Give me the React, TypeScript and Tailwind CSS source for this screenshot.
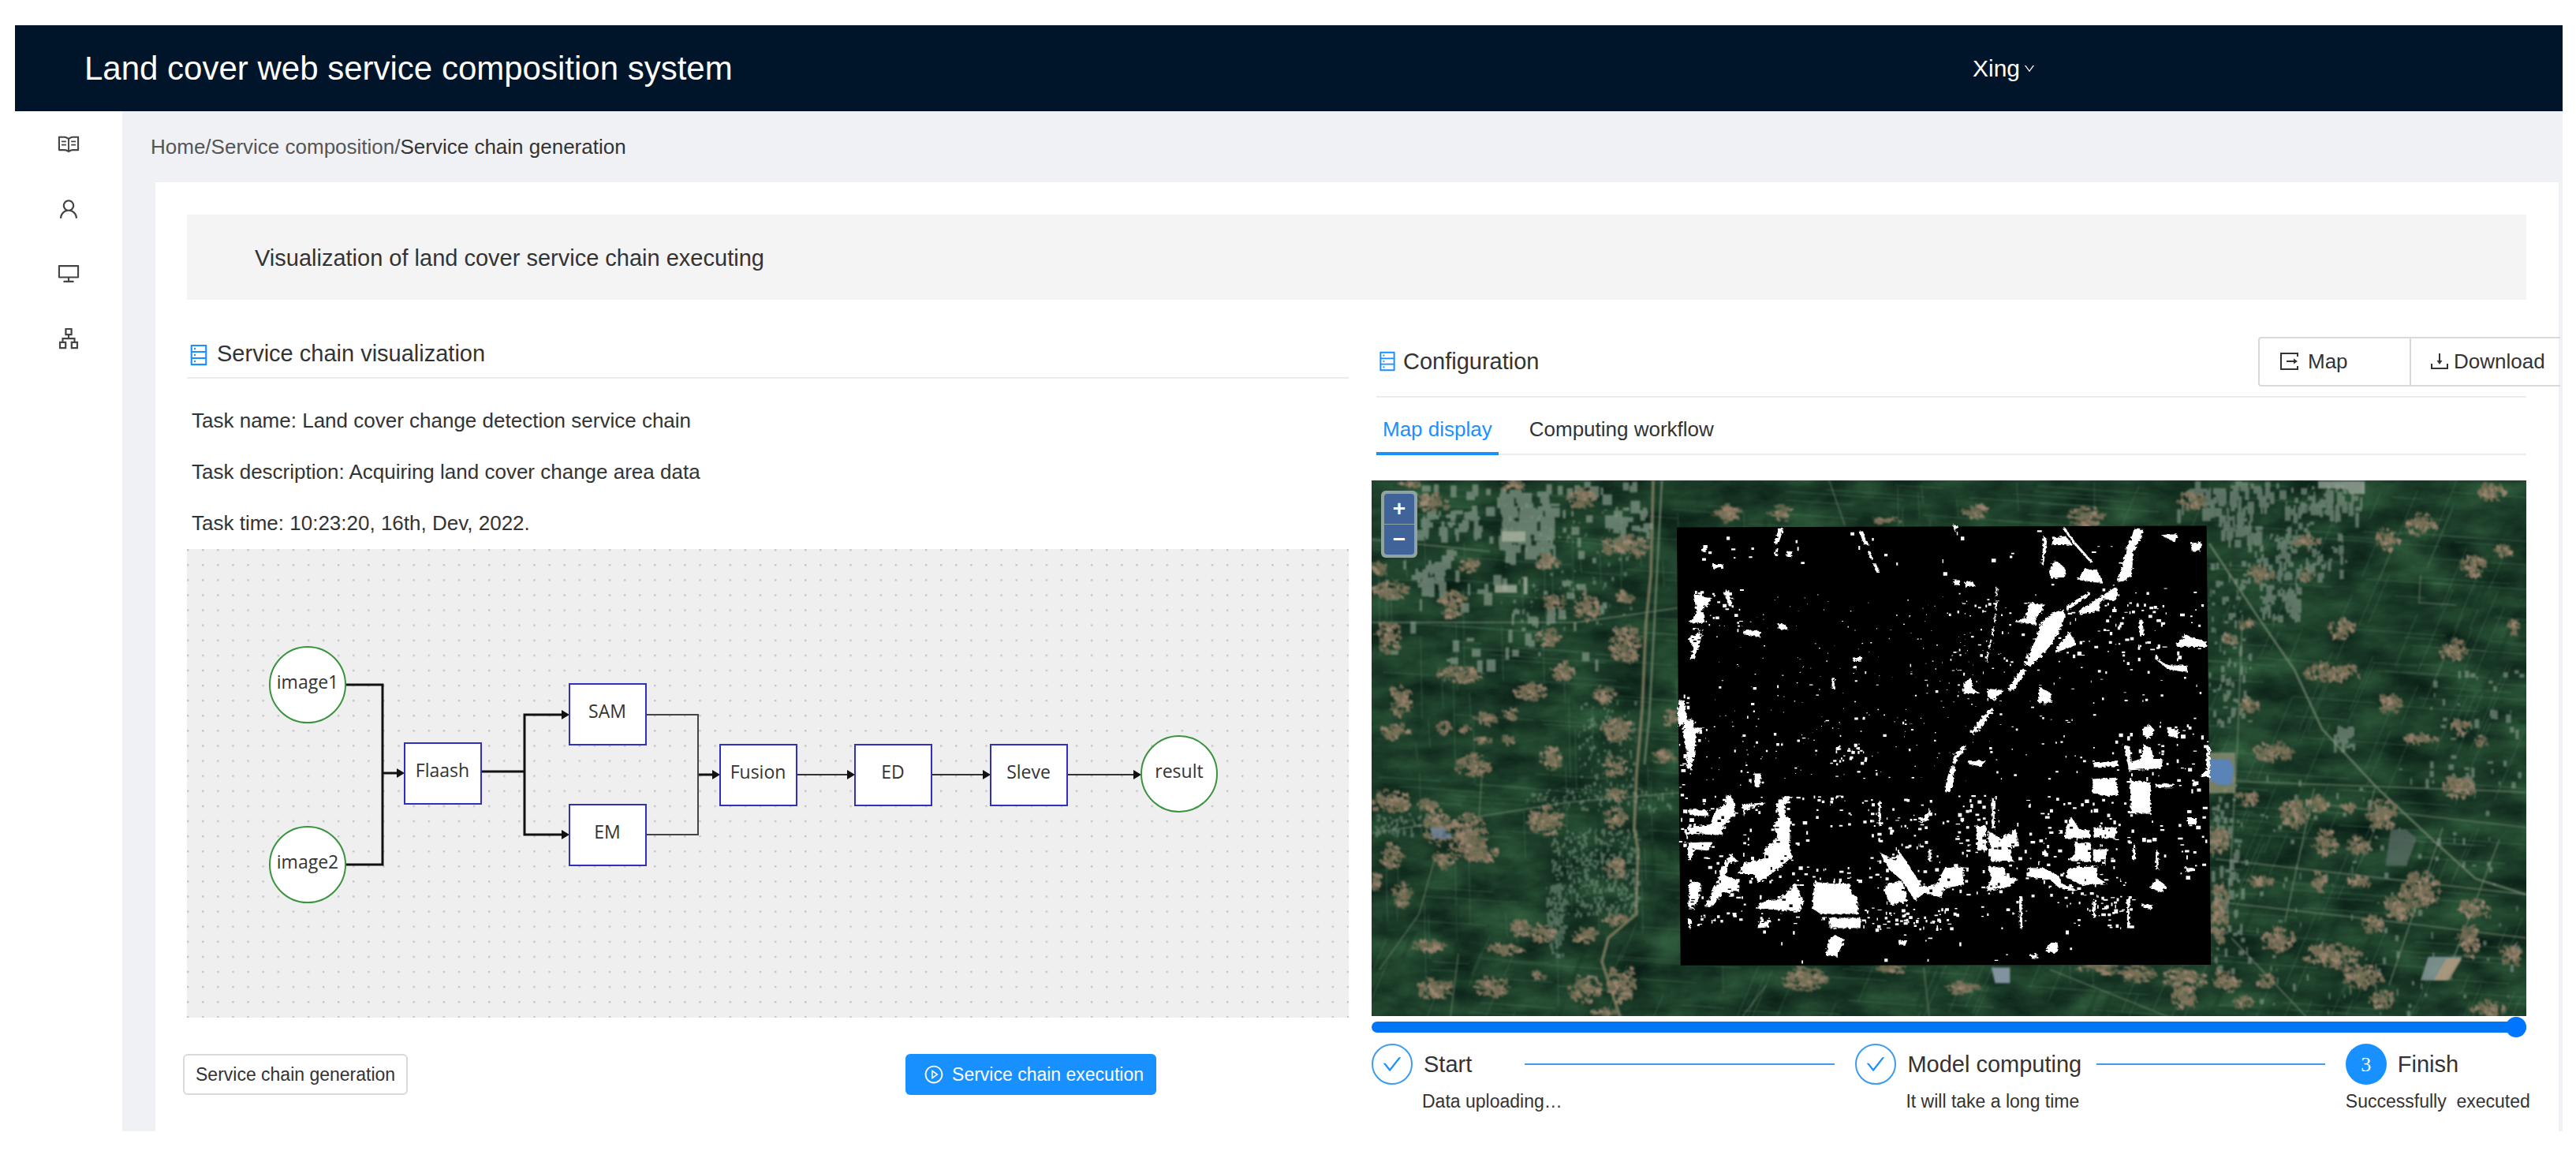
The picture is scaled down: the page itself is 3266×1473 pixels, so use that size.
import React from "react";
import {
  AiOutlineApartment,
  AiOutlineCheck,
  AiOutlineDatabase,
  AiOutlineDesktop,
  AiOutlineDown,
  AiOutlinePlayCircle,
  AiOutlineRead,
  AiOutlineUser,
} from "react-icons/ai";

type Box = [number, number, number, number];

// small seeded generator so the map looks the same on every render
const makeRandom = (seed: number) => () => {
  seed = (seed * 1664525 + 1013904223) % 4294967296;
  return seed / 4294967296;
};

const rectPath = (x: number, y: number, w: number, h: number) =>
  `M${x.toFixed(1)} ${y.toFixed(1)}h${w.toFixed(1)}v${h.toFixed(1)}h${(-w).toFixed(1)}z`;

// scatter little blocks inside ellipses given as centre + size
const scatterEllipses = (boxes: Box[], seed: number, cell: number, fill: number) => {
  const random = makeRandom(seed);
  let d = "";
  boxes.forEach(([cx, cy, w, h]) => {
    const count = Math.round(((w * h) / (cell * cell)) * fill);
    for (let i = 0; i < count; i++) {
      const angle = random() * Math.PI * 2;
      const r = Math.pow(random(), 0.8) * 0.56;
      const bw = cell * (0.5 + random() * 1.5);
      const bh = cell * (0.3 + random() * 0.6);
      d += rectPath(cx + Math.cos(angle) * r * w - bw / 2, cy + Math.sin(angle) * r * h - bh / 2, bw, bh);
    }
  });
  return d;
};

// scatter blocks inside plain rectangles: x, y, w, h, count, size
const scatterRects = (zones: number[][], seed: number) => {
  const random = makeRandom(seed);
  let d = "";
  zones.forEach(([x, y, w, h, count, size]) => {
    for (let i = 0; i < count; i++) {
      const bw = size * (0.3 + random() * 1.1);
      const bh = size * (0.3 + random() * 1.1);
      d += rectPath(x + random() * w, y + random() * h, bw, bh);
    }
  });
  return d;
};

const villagesWest: Box[] = [
  [265, 50, 80, 20], [350, 105, 110, 50], [145, 285, 60, 40], [190, 345, 130, 45], [425, 385, 100, 65],
  [495, 275, 70, 40], [655, 55, 80, 30], [915, 90, 100, 50], [790, 265, 90, 40], [1080, 225, 170, 60],
  [815, 378, 80, 40], [935, 390, 80, 75], [1080, 365, 70, 35], [180, 475, 90, 80], [790, 475, 80, 50],
  [1085, 495, 110, 95], [450, 578, 170, 45], [845, 570, 80, 50], [720, 625, 110, 45], [1000, 632, 80, 45],
  [230, 650, 85, 80], [560, 700, 90, 30], [650, 687, 50, 35], [210, 735, 100, 45], [395, 725, 50, 35],
  [475, 730, 40, 25], [540, 758, 60, 20], [630, 757, 50, 25], [505, 828, 130, 55], [800, 810, 75, 60],
  [1050, 730, 110, 65], [1045, 830, 80, 50], [190, 930, 130, 60], [325, 940, 80, 30], [370, 1000, 100, 90],
  [485, 1030, 130, 130], [540, 1075, 130, 40], [190, 1080, 80, 65], [395, 1085, 70, 50], [785, 980, 130, 70],
  [1045, 910, 90, 30], [1045, 975, 80, 50], [1045, 1112, 80, 50], [1470, 130, 60, 40], [1225, 805, 90, 35],
  [1260, 697, 50, 45], [235, 1185, 70, 60], [130, 1150, 40, 40], [685, 1280, 75, 50], [770, 1292, 75, 50],
  [930, 1297, 85, 40], [1045, 1255, 80, 30], [335, 1327, 120, 30], [620, 1335, 130, 30], [360, 1445, 130, 50],
  [575, 1440, 120, 50], [750, 1410, 50, 20], [930, 1445, 120, 70], [1070, 1430, 100, 100], [1000, 1510, 80, 20],
];

const villagesEast: Box[] = [
  [325, 572, 90, 35], [500, 573, 60, 25], [500, 500, 90, 30], [815, 495, 80, 45], [940, 462, 110, 45],
  [1215, 392, 100, 40], [1145, 555, 90, 45], [1265, 520, 60, 25], [640, 693, 90, 45], [600, 790, 200, 40],
  [1065, 740, 100, 40], [1305, 688, 45, 35], [820, 857, 80, 45], [280, 860, 70, 30], [375, 963, 140, 40],
  [935, 935, 120, 22], [1095, 908, 80, 30], [1175, 940, 40, 25], [1090, 1040, 120, 45], [545, 1077, 70, 35],
  [455, 1100, 110, 60], [665, 1085, 50, 20], [790, 1105, 110, 70], [275, 1068, 90, 30], [575, 1165, 90, 55],
  [705, 1170, 90, 35], [160, 1155, 80, 60], [315, 1250, 100, 20], [550, 1250, 50, 40], [705, 1252, 80, 25],
  [945, 1268, 130, 70], [860, 1305, 110, 60], [1145, 1310, 130, 40], [1130, 1380, 80, 70], [755, 1345, 70, 40],
  [165, 1320, 70, 120], [390, 1380, 120, 50], [600, 1415, 200, 50], [710, 1460, 150, 50], [1290, 1410, 70, 50],
  [180, 1465, 70, 35], [345, 1475, 60, 35], [30, 1505, 90, 50], [250, 1515, 80, 25], [795, 1510, 80, 35],
  [1200, 1530, 120, 30], [210, 712, 60, 25], [270, 680, 60, 20], [60, 410, 100, 40],
];

const villagesMiddle: Box[] = [
  [190, 30, 60, 50], [335, 25, 60, 50], [855, 20, 70, 40], [1155, 35, 90, 60], [620, 50, 70, 20],
  [400, 1520, 110, 70], [630, 1490, 60, 35], [820, 1550, 80, 40], [1190, 1490, 100, 35], [1290, 1505, 90, 50],
  [1420, 1520, 110, 60], [1545, 1540, 40, 40],
];

const changeShapes = [
  "1283,78 1308,78 1302,110 1280,150 1278,225 1255,245 1238,248 1255,180 1262,140 1275,110",
  "1165,278 1100,325 1103,340 1165,290",
  "1095,335 1097,360 1085,400 1060,450 1030,490 1005,517 987,515 1000,480 1020,430 1030,385 1060,350",
  "985,525 993,530 965,590 950,600 945,590 970,545",
  "903,650 905,660 870,715 850,738 848,728 875,680",
  "830,768 832,780 808,815 805,830 795,830 800,800",
  "792,838 803,840 795,900 788,922 775,920 780,880",
  "890,590 935,595 905,628 890,615",
  "1235,262 1240,290 1225,308 1205,300 1190,320 1190,340 1135,352 1135,340 1180,305",
  "328,75 342,76 328,125 318,125",
  "322,138 328,138 324,162 317,162",
  "350,148 366,150 362,168 350,166",
  "545,85 555,85 570,130 558,130",
  "568,150 576,150 582,172 574,172",
  "582,188 590,188 600,218 592,218",
  "152,190 180,190 178,202 152,206",
  "122,138 134,138 134,152 122,150",
  "795,66 812,66 803,88",
  "800,242 815,242 815,258 798,256",
  "828,250 848,243 858,262 828,264",
  "1055,215 1062,190 1075,180 1100,205 1098,230 1060,238",
  "1130,240 1150,205 1185,208 1200,250 1165,248",
  "1065,105 1100,100 1118,128 1062,130",
  "1040,100 1050,110 1040,195 1035,190",
  "1355,96 1400,94 1396,122 1375,108",
  "1436,125 1464,118 1462,148 1438,148",
  "1000,315 1042,318 1035,345 1018,360 1020,385 960,375 992,362",
  "1110,405 1128,450 1070,475 1080,450",
  "1395,450 1420,418 1440,425 1480,440 1480,456 1400,455",
  "1340,495 1378,515 1428,515 1425,538 1375,528",
  "1295,365 1306,370 1310,420 1298,420",
  "100,285 150,300 140,320 125,330 130,380 90,378 108,345",
  "125,400 118,440 98,502 90,495 100,460 85,430",
  "180,280 195,278 205,325 195,325",
  "65,625 75,625 82,690 60,712 56,660",
  "75,690 100,690 100,715 130,715 105,735 105,790 92,850 82,845 82,790 72,740",
  "262,862 282,862 278,905 262,903",
  "235,402 280,405 278,424 232,415",
  "325,380 350,385 350,402 328,398",
  "835,820 885,820 875,840 840,832",
  "825,570 845,555 850,590 870,605 825,605",
  "1030,585 1060,605 1060,635 1025,635",
  "528,490 552,488 550,500 528,502",
  "200,930 212,965 210,1000 185,1025 175,1060 85,1055 85,1035 145,1025 155,990 185,960 190,932",
  "85,975 135,980 140,1000 90,995",
  "345,935 365,935 345,965 345,1000 360,1005 358,1100 365,1130 330,1165 275,1215 262,1185 220,1185 235,1150 290,1135 290,1105 325,1070 315,1030 330,1000 320,960",
  "230,960 300,955 240,980 235,1000",
  "200,1120 220,1145 195,1150 185,1190 220,1205 222,1240 180,1245 150,1290 130,1290 165,1205 175,1160",
  "90,1205 120,1215 115,1260 100,1298 85,1290",
  "85,1085 150,1080 140,1110 100,1105 95,1140 85,1140",
  "425,1210 475,1215 520,1215 525,1250 540,1258 542,1313 440,1312 418,1295",
  "465,1325 550,1325 548,1358 465,1358",
  "480,1380 505,1395 485,1450 455,1445 465,1395",
  "375,1215 395,1270 385,1305 265,1295 290,1270 330,1265",
  "275,1340 308,1335 300,1355 272,1358",
  "600,1115 640,1140 655,1115 680,1160 715,1225 750,1220 775,1165 825,1160 825,1220 775,1230 765,1260 720,1245 695,1270 660,1205 625,1170",
  "620,1215 660,1205 675,1270 630,1285 612,1240",
  "735,980 740,985 725,1015 705,1020",
  "890,1045 925,1070 965,1040 975,1095 945,1100 960,1145 898,1143",
  "860,1030 885,1030 888,1110 860,1105",
  "890,1160 935,1165 940,1195 970,1200 950,1225 885,1240 900,1200",
  "1100,1035 1115,1000 1135,1040 1165,1045 1165,1070 1100,1070",
  "1175,1035 1240,1035 1230,1070 1175,1068",
  "1125,1085 1168,1085 1168,1145 1105,1140 1125,1120",
  "1172,1105 1215,1105 1205,1145 1172,1145",
  "1100,1175 1130,1160 1185,1158 1185,1195 1210,1215 1145,1222 1100,1195",
  "995,1165 1040,1165 1080,1190 1090,1215 1135,1240 1085,1232 1060,1205 1000,1195",
  "1170,880 1235,875 1240,930 1215,935 1172,925",
  "1272,885 1328,890 1328,992 1275,990",
  "1255,770 1272,775 1275,825 1300,815 1310,770 1330,780 1335,815 1362,815 1355,845 1270,852",
  "1305,720 1325,705 1340,725 1320,755",
  "1375,720 1403,720 1400,748 1375,742",
  "1175,830 1240,820 1240,838 1175,842",
  "1340,895 1390,895 1390,907 1340,907",
  "1345,1200 1372,1225 1355,1245 1325,1228",
  "1305,1280 1335,1285 1325,1298 1308,1292",
  "1428,1005 1455,1005 1450,1025 1428,1025",
  "1478,775 1487,775 1487,875 1460,870 1478,850",
  "1420,1165 1445,1165 1445,1175 1420,1178",
  "650,1400 675,1395 668,1415 652,1412",
  "1060,1405 1080,1405 1075,1440 1045,1432",
  "1005,1445 1022,1440 1025,1456 1010,1458",
];

// x, y, w, h, count, block size
const changeSpecks = [
  [60, 80, 1400, 140, 28, 9],
  [80, 270, 150, 130, 30, 8],
  [130, 280, 800, 620, 230, 3],
  [80, 500, 700, 400, 60, 7],
  [460, 760, 100, 70, 28, 7],
  [780, 300, 160, 330, 40, 7],
  [930, 250, 420, 300, 70, 7],
  [1100, 330, 360, 170, 40, 9],
  [840, 550, 620, 330, 75, 6],
  [1170, 700, 310, 220, 50, 10],
  [85, 930, 320, 420, 90, 9],
  [60, 600, 30, 500, 30, 9],
  [420, 930, 190, 100, 30, 7],
  [570, 940, 230, 420, 100, 8],
  [800, 930, 480, 320, 170, 9],
  [400, 1160, 180, 50, 20, 8],
  [550, 1290, 260, 70, 50, 8],
  [870, 1240, 410, 118, 35, 7],
  [1170, 1250, 110, 108, 30, 9],
  [1270, 950, 210, 250, 28, 10],
  [80, 1300, 420, 58, 30, 8],
  [250, 1365, 1230, 100, 14, 9],
  [1190, 255, 280, 130, 22, 8],
];

const westTown = [
  [600, 60, 180, 200, 60, 40],
  [160, 45, 1000, 130, 70, 26],
  [270, 120, 240, 60, 25, 28],
  [265, 260, 120, 80, 26, 34],
  [150, 190, 850, 350, 70, 26],
  [1020, 120, 150, 90, 20, 26],
];

const westHaze = [
  [800, 1000, 330, 240, 420, 10],
  [780, 1150, 70, 200, 110, 12],
  [900, 640, 220, 260, 130, 9],
  [700, 890, 560, 60, 120, 9],
  [120, 960, 240, 60, 80, 10],
  [600, 100, 500, 350, 110, 9],
];

const eastTown = [
  [0, 365, 720, 70, 100, 24],
  [160, 440, 160, 60, 40, 22],
  [310, 590, 160, 80, 70, 16],
  [300, 480, 250, 100, 70, 16],
  [120, 540, 160, 360, 90, 14],
  [130, 1060, 120, 380, 60, 18],
  [600, 900, 80, 50, 22, 18],
  [940, 780, 390, 250, 45, 16],
  [400, 370, 260, 200, 60, 16],
  [130, 1000, 1190, 540, 130, 12],
];

const fieldLines = (seed: number, count: number) => {
  const random = makeRandom(seed);
  let d = "";
  for (let i = 0; i < count; i++) {
    const x = random() * 1464;
    const y = random() * 680;
    const length = 30 + random() * 130;
    // fields lean to the right in the east of the map
    if (i % 2) d += `M${x.toFixed(0)} ${y.toFixed(0)}l${length.toFixed(0)} ${(length * 0.07).toFixed(0)}`;
    else d += `M${x.toFixed(0)} ${y.toFixed(0)}l${(x > 950 || y > 560 ? -length * 0.3 : 2).toFixed(0)} ${(length * 0.7).toFixed(0)}`;
  }
  return d;
};

const roofs = ["#967d67", "#7d705a", "#a68c78", "#6b6a50"];

const Villages = ({ boxes, seed, cell }: { boxes: Box[]; seed: number; cell: number }) => (
  <g filter="url(#rough)">
    {roofs.map((color, index) => (
      <path key={color} d={scatterEllipses(boxes, seed + index * 17, cell, 0.5)} fill={color} opacity="0.8" />
    ))}
  </g>
);

const SatelliteMap = () => (
  <svg viewBox="0 0 1464 679" className="block w-full" role="img" aria-label="Land cover change map">
    <defs>
      <filter id="fields" x="0" y="0" width="100%" height="100%" colorInterpolationFilters="sRGB">
        <feTurbulence type="fractalNoise" baseFrequency="0.014 0.028" numOctaves="6" seed="8" />
        <feColorMatrix values="0.2 0 0 0 0.01  0.32 0 0 0 0.08  0.2 0 0 0 0.06  0 0 0 0 1" />
      </filter>
      <filter id="rough" x="-5%" y="-5%" width="110%" height="110%">
        <feTurbulence type="fractalNoise" baseFrequency="0.12" numOctaves="2" seed="3" result="noise" />
        <feDisplacementMap in="SourceGraphic" in2="noise" scale="13" />
      </filter>
      <filter id="soft" colorInterpolationFilters="sRGB">
        <feGaussianBlur stdDeviation="0.8" />
      </filter>
    </defs>
    <rect width="1464" height="680" fill="#1b3d2a" />
    <rect width="1464" height="680" filter="url(#fields)" />
    <g filter="url(#soft)">
      <path d={fieldLines(41, 620)} stroke="#5d8a6b" strokeWidth="1" opacity="0.45" fill="none" />
      <path d={fieldLines(97, 120)} stroke="#12301f" strokeWidth="5" opacity="0.3" fill="none" />
      <g fill="none" stroke="#75876f">
        <path d="M357 0 354 120 348 180 343 290 336 370 333 440 338 470 335 550 300 580 292 610 315 680" stroke="#8a8365" strokeWidth="4" opacity="0.75" />
        <path d="M368 0 358 190 352 300 346 360" strokeWidth="3" opacity="0.7" />
        <path d="M0 180 260 180 400 160M0 447 110 430 250 408 400 395M0 75 150 90" strokeWidth="2" opacity="0.6" />
        <path d="M80 480 60 550 10 620M110 600 100 680M140 370 136 430" strokeWidth="2" opacity="0.5" />
        <path d="M1062 80 1125 175 1170 240 1205 315 1275 390 1350 460 1400 505 1464 525" strokeWidth="3" opacity="0.7" />
        <path d="M1104 170 1098 330 1085 560M1195 390 1158 560M1272 390 1262 430M1358 440 1290 640M1430 455 1370 610M1060 380 1464 395M1070 480 1464 525M1080 535 1300 560 1464 580M1090 580 1185 680" strokeWidth="2" opacity="0.6" />
        <path d="M1330 120 1328 155 1375 158M1200 410 1464 440M580 0 600 57M860 620 1010 680M500 640 470 680M700 617 707 680" strokeWidth="2" opacity="0.5" />
      </g>
      <g transform="translate(-39 -19) scale(.3333 .459)">
        <path d={scatterRects(westTown, 5)} fill="#8d9f91" opacity="0.65" />
        <path d={scatterRects(westHaze, 11)} fill="#87a08e" opacity="0.5" />
        <Villages boxes={villagesWest} seed={21} cell={13} />
        <path d="M340 1000h60v16h20v14h-70z" fill="#6d87a5" opacity="0.7" />
        <path d="M585 330h85v22h-85zM695 308h15v48h-15zM612 182h90v28h-90z" fill="#a9b19f" opacity="0.8" />
      </g>
      <g transform="translate(1021 -209) scale(.3286 .574)">
        <path d={scatterRects(eastTown, 63)} fill="#8c9c8f" opacity="0.6" />
        <path d="M545 366h180v28h-60l-8-12h-112z" fill="#96a197" opacity="0.8" />
        <Villages boxes={villagesEast} seed={77} cell={12} />
        <path d="M120 965h105v90h-105z" fill="#9b9a7c" opacity="0.7" />
        <path d="M122 980h80l18 20-10 36h-50l-38-14z" fill="#5a83b8" />
        <path d="M970 1416h130l-60 52h-100z" fill="#8d9fa0" opacity="0.8" />
        <path d="M1040 1420h60l-50 48h-60z" fill="#b19a7c" opacity="0.8" />
        <path d="M825 1135h60l40 20-40 60h-80z" fill="#5d6c68" opacity="0.7" />
      </g>
      <g transform="translate(361 31) scale(.472 .395)">
        <Villages boxes={villagesMiddle} seed={33} cell={12} />
        <path d="M900 1485h50v50h-40z" fill="#8293a0" />
      </g>
    </g>
    <g transform="translate(361 31) scale(.472 .395)">
      <path d="M55 72 1478 67 1490 1476 65 1478z" fill="#000" />
      <g fill="#fff" filter="url(#rough)">
        {changeShapes.map((points) => (
          <polygon key={points} points={points} />
        ))}
        <path
          d="M600 950v80M905 940v100M978 1258l2 100M1268 1260v98M1177 1265v60M1095 75l30 50 45 60M90 1330v28M1345 1110v60M1283 1090v50M475 555v35M735 1105v40"
          stroke="#fff"
          strokeWidth="7"
          fill="none"
        />
        <path d="M914 265v50l-6 70-22 120" stroke="#fff" strokeWidth="4" strokeDasharray="30 12" fill="none" />
      </g>
      <path d={scatterRects(changeSpecks, 19)} fill="#fff" />
      {/* parcels burnt back into the built-up strip */}
      <path
        d={scatterRects([[85, 940, 300, 400, 90, 7], [580, 1030, 700, 220, 120, 7], [85, 280, 60, 220, 20, 8]], 51)}
        fill="#000"
      />
      <path d="M85 1060h80v22h-80zM440 1315h105v8h-105zM1168 1040h5v110h-5z" fill="#000" />
    </g>
  </svg>
);

const ServiceGraph = () => {
  const boxes = [
    { label: "Flaash", x: 276, y: 246 },
    { label: "SAM", x: 485, y: 171 },
    { label: "EM", x: 485, y: 324 },
    { label: "Fusion", x: 676, y: 248 },
    { label: "ED", x: 847, y: 248 },
    { label: "Sleve", x: 1019, y: 248 },
  ];
  const circles = [
    { label: "image1", x: 153, y: 172 },
    { label: "image2", x: 153, y: 400 },
    { label: "result", x: 1258, y: 285 },
  ];
  const arrows = [
    [276, 284],
    [485, 210],
    [485, 362],
    [676, 286],
    [847, 286],
    [1019, 286],
    [1210, 286],
  ];

  return (
    <svg viewBox="0 0 1473 594" className="block w-full" role="img" aria-label="Service chain">
      <defs>
        <pattern id="dots" width="19.1" height="19.1" patternUnits="userSpaceOnUse">
          <rect x="0" y="0" width="2.4" height="2.4" fill="#c4c4c4" />
        </pattern>
      </defs>
      <rect width="1473" height="594" fill="#efefef" />
      <rect width="1473" height="594" fill="url(#dots)" />
      <g fill="none" stroke="#111">
        <path d="M201 172h47v228h-47M248 284h24" strokeWidth="3" />
        <path d="M373 282h55M481 210h-53v152h53M648 286h24" strokeWidth="3" />
        <path d="M582 210h66v152h-66" stroke="#444" strokeWidth="2" />
        <path d="M773 286h70M944 286h71M1116 286h90" stroke="#333" strokeWidth="2" />
      </g>
      {arrows.map(([x, y]) => (
        <path key={`${x}-${y}`} d={`M${x} ${y}l-10 -6v12z`} fill="#111" />
      ))}
      <g fill="#333" fontFamily="'Open Sans', sans-serif" fontSize="23" textAnchor="middle">
        {boxes.map((box) => (
          <g key={box.label}>
            <rect x={box.x} y={box.y} width="97" height="77" fill="#fff" stroke="#3030c0" strokeWidth="2" />
            <text x={box.x + 48} y={box.y + 43}>
              {box.label}
            </text>
          </g>
        ))}
        {circles.map((circle) => (
          <g key={circle.label}>
            <circle cx={circle.x} cy={circle.y} r="48" fill="#fff" stroke="#3a933f" strokeWidth="2" />
            <text x={circle.x} y={circle.y + 5}>
              {circle.label}
            </text>
          </g>
        ))}
      </g>
    </svg>
  );
};

const MapExportIcon = () => (
  <svg viewBox="0 0 24 24" className="size-[24px]" fill="none" stroke="currentColor" strokeWidth="2">
    <path d="M23 6V2H2v20h21v-4" />
    <path d="M9 12h11" />
    <path d="M18 8.5 23 12l-5 3.500z" fill="currentColor" stroke="none" />
  </svg>
);

const TrayDownloadIcon = () => (
  <svg viewBox="0 0 24 24" className="size-[24px]" fill="none" stroke="currentColor" strokeWidth="2">
    <path d="M2 15v6h20v-6" />
    <path d="M12 2v10" />
    <path d="M8.500 11h7L12 16z" fill="currentColor" stroke="none" />
  </svg>
);

const menu = [
  { name: "Catalogue", icon: AiOutlineRead },
  { name: "User", icon: AiOutlineUser },
  { name: "Monitor", icon: AiOutlineDesktop },
  { name: "Service chain", icon: AiOutlineApartment },
];

const Step = ({
  title,
  text,
  number,
}: {
  title: string;
  text: string;
  number?: string;
}) => (
  <li className="whitespace-nowrap">
    <div className="flex items-center">
      {number ? (
        <span className="flex size-[52px] shrink-0 items-center justify-center rounded-full bg-[#1890ff] font-['Liberation_Serif',serif] text-[26px] text-white">
          {number}
        </span>
      ) : (
        <span className="flex size-[52px] shrink-0 items-center justify-center rounded-full border-2 border-[#3c9cf0] text-[#1890ff]">
          <AiOutlineCheck size={28} />
        </span>
      )}
      <span className="ml-[14px] min-w-[109px] text-[29px] leading-[34px]">{title}</span>
      {!number && <span className="mr-[26px] ml-[19px] h-[2px] flex-1 bg-[#3c9cf0]"></span>}
    </div>
    <p className={number ? "mt-1 text-[23px] leading-[34px] whitespace-pre" : "mt-1 pl-[64px] text-[23px] leading-[34px]"}>
      {text}
    </p>
  </li>
);

const App = () => {
  return (
    <div className="min-h-screen bg-white pt-[32px] pr-[17px] pb-[36px] pl-[19px] font-['Liberation_Sans',Arial,sans-serif] text-[#333]">
      <header className="flex h-[109px] items-center justify-between bg-[#001529] pr-[668px] pl-[88px] text-white">
        <h1 className="text-[42px] leading-none">Land cover web service composition system</h1>
        <button className="flex items-center gap-1 text-[30px] leading-none">
          Xing
          <AiOutlineDown size={16} />
        </button>
      </header>

      <div className="flex">
        <nav className="w-[136px] shrink-0 pt-px">
          {menu.map(({ name, icon: Icon }) => (
            <a key={name} href="#" aria-label={name} className="flex h-[82px] items-center justify-center text-[#444]">
              <Icon size={30} />
            </a>
          ))}
        </nav>

        <main className="min-w-0 flex-1 bg-[#eff1f5] pr-[5px]">
          <div className="flex h-[90px] items-center pl-[36px] text-[26px] text-[#555]">
            <a href="#">Home</a>/<a href="#">Service composition</a>/
            <span className="text-[#333]">Service chain generation</span>
          </div>

          <div className="ml-[42px] bg-white pt-[41px] pr-[41px] pb-[21px] pl-[40px]">
            <h2 className="flex h-[108px] items-center bg-[#f4f4f4] pt-1 pl-[86px] text-[29px]">
              Visualization of land cover service chain executing
            </h2>

            <div className="grid grid-cols-[1473fr_1464fr] gap-[29px]">
              <section className="min-w-0">
                <div className="flex h-[100px] items-end gap-[8px] border-b-2 border-[#ececec] pb-[13px]">
                  <AiOutlineDatabase className="size-[30px] text-[#1890ff]" />
                  <h3 className="text-[29px] leading-[34px]">Service chain visualization</h3>
                </div>
                <div className="mt-[21px] pl-[6px] text-[26px] leading-[65px]">
                  <p>Task name: Land cover change detection service chain</p>
                  <p>Task description: Acquiring land cover change area data</p>
                  <p>Task time: 10:23:20, 16th, Dev, 2022.</p>
                </div>
                <ServiceGraph />
                <div className="mt-[46px] -ml-[5px] flex justify-between pr-[244px]">
                  <button className="h-[52px] rounded-md border-2 border-[#d9d9d9] px-[14px] text-[23px]">
                    Service chain generation
                  </button>
                  <button className="flex h-[52px] items-center gap-[10px] rounded-md bg-[#1890ff] pr-[16px] pl-[23px] text-[23px] text-white">
                    <AiOutlinePlayCircle size={26} />
                    Service chain execution
                  </button>
                </div>
              </section>

              <section className="min-w-0">
                <div className="ml-[6px] flex h-[124px] items-center justify-between border-b-2 border-[#ececec] pt-[34px]">
                  <div className="flex items-center gap-[6px]">
                    <AiOutlineDatabase className="size-[28px] text-[#1890ff]" />
                    <h3 className="text-[29px] leading-[34px]">Configuration</h3>
                  </div>
                  <div className="-mr-[43px] flex h-[63px] rounded-l-sm border-2 border-r-0 border-[#d9d9d9] text-[26px]">
                    <button className="flex w-[190px] items-center gap-[12px] pl-[25px]">
                      <MapExportIcon />
                      Map
                    </button>
                    <button className="flex w-[191px] items-center gap-[6px] border-l-2 border-[#d9d9d9] pl-[24px]">
                      <TrayDownloadIcon />
                      Download
                    </button>
                  </div>
                </div>

                <div className="ml-[6px] flex gap-[31px] border-b-2 border-[#ececec] text-[26px]" role="tablist">
                  <button
                    role="tab"
                    aria-selected="true"
                    className="-mb-[2px] h-[73px] border-b-4 border-[#1890ff] px-2 pt-3 text-[#1890ff]"
                  >
                    Map display
                  </button>
                  <button role="tab" aria-selected="false" className="px-2 pt-3 pb-[2px]">
                    Computing workflow
                  </button>
                </div>

                <div className="relative mt-[32px]">
                  <SatelliteMap />
                  <div className="absolute top-[13px] left-[12px] flex w-[46px] flex-col gap-px rounded-md bg-[#8fa3a0] p-1 text-[28px] leading-none font-bold text-white">
                    <button className="h-[38px] rounded-t-sm bg-[#40639a]">+</button>
                    <button className="h-[38px] rounded-b-sm bg-[#40639a]">−</button>
                  </div>
                </div>

                <input
                  type="range"
                  aria-label="Progress"
                  defaultValue={100}
                  className="mt-px block h-[26px] w-full appearance-none bg-transparent [&::-webkit-slider-runnable-track]:h-[14px] [&::-webkit-slider-runnable-track]:rounded-full [&::-webkit-slider-runnable-track]:bg-[#0075f5] [&::-webkit-slider-thumb]:-mt-[6px] [&::-webkit-slider-thumb]:size-[26px] [&::-webkit-slider-thumb]:appearance-none [&::-webkit-slider-thumb]:rounded-full [&::-webkit-slider-thumb]:bg-[#0075ff]"
                />

                <ol className="mt-[8px] -mr-[7px] grid grid-cols-[613fr_621fr_236fr]">
                  <Step title="Start" text="Data uploading…" />
                  <Step title="Model computing" text="It will take a long time" />
                  <Step title="Finish" text="Successfully  executed" number="3" />
                </ol>
              </section>
            </div>
          </div>
        </main>
      </div>
    </div>
  );
};

export default App;
